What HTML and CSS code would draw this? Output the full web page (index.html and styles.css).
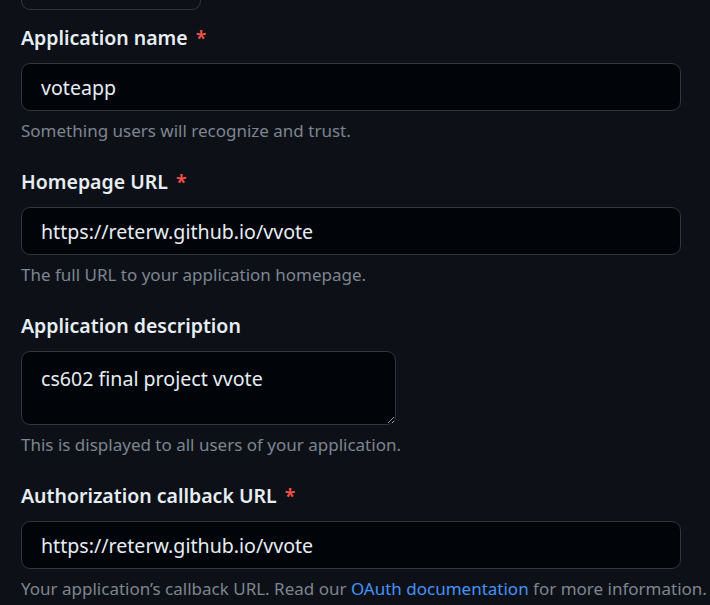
FILE: index.html
```html
<!DOCTYPE html>
<html lang="en">
<head>
<meta charset="utf-8">
<title>Register a new OAuth application</title>
<link rel="stylesheet" href="styles.css">
</head>
<body>
<form class="form">
  <div class="prev-field"></div>

  <div class="group">
    <label class="label" for="name">Application name <span class="req">*</span></label>
    <input class="control" id="name" type="text" value="voteapp">
    <p class="note">Something users will recognize and trust.</p>
  </div>

  <div class="group">
    <label class="label" for="url">Homepage URL <span class="req">*</span></label>
    <input class="control" id="url" type="text" value="https://reterw.github.io/vvote">
    <p class="note">The full URL to your application homepage.</p>
  </div>

  <div class="group">
    <label class="label" for="desc">Application description</label>
    <textarea class="control area" id="desc">cs602 final project vvote</textarea>
    <p class="note">This is displayed to all users of your application.</p>
  </div>

  <div class="group">
    <label class="label" for="cb">Authorization callback URL <span class="req">*</span></label>
    <input class="control" id="cb" type="text" value="https://reterw.github.io/vvote">
    <p class="note">Your application’s callback URL. Read our <a class="link" href="#">OAuth documentation</a> for more information.</p>
  </div>
</form>
</body>
</html>
```

FILE: styles.css
```css
html, body {
  margin: 0;
  padding: 0;
  background: #0d1117;
}

body {
  font-family: "Noto Sans", "Open Sans", sans-serif;
  color: #e6edf3;
  color-scheme: dark;
}

.form {
  padding: 0 0 0 21px;
  margin: 0;
}

.prev-field {
  width: 178px;
  height: 9px;
  border: 1px solid #30363d;
  border-top: none;
  border-radius: 0 0 9px 9px;
  background: #0d1117;
}

.group {
  display: flex;
  flex-direction: column;
  align-items: flex-start;
  margin-top: 13px;
}

.group + .group {
  margin-top: 23px;
}

.label {
  display: block;
  font-size: 19.5px;
  line-height: 30px;
  font-weight: 600;
  color: #e6edf3;
}

.req {
  color: #f85149;
  margin-left: 3px;
}

.control {
  box-sizing: border-box;
  width: 660px;
  height: 48px;
  margin: 10px 0 0 0;
  padding: 0 19px;
  background: #010409;
  border: 1px solid #30363d;
  border-radius: 9px;
  color: #e6edf3;
  font-family: "Noto Sans", "Open Sans", sans-serif;
  font-size: 19.6px;
  line-height: 30px;
  outline: none;
}

.area {
  width: 375px;
  height: 74px;
  padding: 12px 19px 0;
  resize: vertical;
  color-scheme: dark;
}

.note {
  margin: 6px 0 0 0;
  font-size: 17px;
  line-height: 27px;
  color: #7d8590;
  white-space: nowrap;
}

.link {
  color: #4493f8;
  text-decoration: none;
}
```
